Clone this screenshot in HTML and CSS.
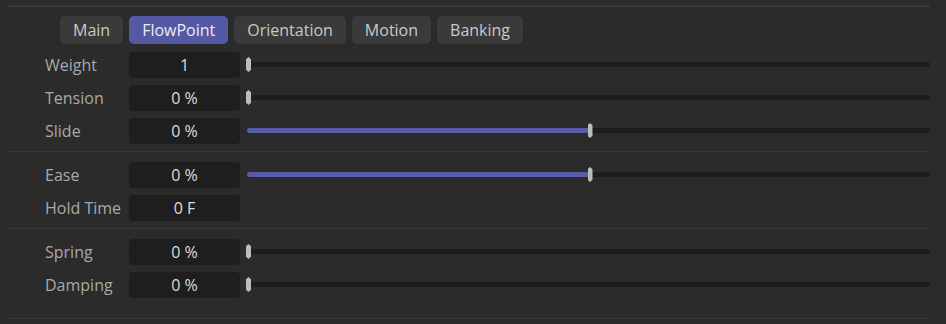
FILE: index.html
```html
<!DOCTYPE html>
<html lang="en">

<head>
    <meta charset="UTF-8">
    <title>FlowPoint</title>
    <link rel="stylesheet" href="styles.css">
</head>

<body>
    <div class="panel">
        <div class="rule top"></div>

        <div class="tabs">
            <button class="tab">Main</button>
            <button class="tab active">FlowPoint</button>
            <button class="tab">Orientation</button>
            <button class="tab">Motion</button>
            <button class="tab">Banking</button>
        </div>

        <div class="row">
            <span class="label">Weight</span>
            <span class="field">1</span>
            <div class="slider"><div class="fill" style="width: 0%"></div><span class="knob" style="left: 0%"></span></div>
        </div>
        <div class="row">
            <span class="label">Tension</span>
            <span class="field">0 %</span>
            <div class="slider"><div class="fill" style="width: 0%"></div><span class="knob" style="left: 0%"></span></div>
        </div>
        <div class="row">
            <span class="label">Slide</span>
            <span class="field">0 %</span>
            <div class="slider"><div class="fill" style="width: 50%"></div><span class="knob" style="left: 50%"></span></div>
        </div>

        <div class="rule"></div>

        <div class="row">
            <span class="label">Ease</span>
            <span class="field">0 %</span>
            <div class="slider"><div class="fill" style="width: 50%"></div><span class="knob" style="left: 50%"></span></div>
        </div>
        <div class="row">
            <span class="label">Hold Time</span>
            <span class="field">0 F</span>
        </div>

        <div class="rule"></div>

        <div class="row">
            <span class="label">Spring</span>
            <span class="field">0 %</span>
            <div class="slider"><div class="fill" style="width: 0%"></div><span class="knob" style="left: 0%"></span></div>
        </div>
        <div class="row">
            <span class="label">Damping</span>
            <span class="field">0 %</span>
            <div class="slider"><div class="fill" style="width: 0%"></div><span class="knob" style="left: 0%"></span></div>
        </div>

        <div class="rule bottom"></div>
    </div>
</body>

</html>
```

FILE: styles.css
```css
body {
    margin: 0;
    background-color: #2b2b2b;
    font-family: "Open Sans", "Noto Sans", sans-serif;
    font-size: 16px;
    color: #a9a9a9;
}

.panel {
    padding: 0 16px 0 8px;
}

/* Lignes de séparation */
.rule {
    height: 1px;
    background-color: #363636;
    margin: 4px 0 6px 0;
}

.rule.top {
    height: 2px;
    margin: 5px 0 9px 0;
    background-color: #383838;
}

.rule.bottom {
    margin-top: 17px;
    margin-bottom: 0;
}

/* Onglets */
.tabs {
    display: flex;
    gap: 6px;
    padding-left: 52px;
    margin-bottom: 4px;
}

.tab {
    height: 28px;
    padding: 0 13px;
    border: none;
    border-radius: 5px;
    background-color: #3a3a3a;
    color: #c9c9c9;
    font-family: inherit;
    font-size: 16px;
}

.tab.active {
    background-color: #5558a3;
    color: #ececf4;
}

/* Lignes de paramètres */
.row {
    display: flex;
    align-items: center;
    height: 33px;
    padding-left: 37px;
}

.label {
    width: 84px;
    white-space: nowrap;
}

.field {
    width: 111px;
    height: 26px;
    line-height: 26px;
    background-color: #1e1e1e;
    border-radius: 4px;
    text-align: center;
    color: #dcdcdc;
}

.slider {
    position: relative;
    flex: 1;
    height: 5px;
    margin-left: 7px;
    background-color: #1d1d1d;
    border-radius: 2px 3px 3px 2px;
}

.fill {
    height: 5px;
    background-color: #585ba6;
    border-radius: 2px 0 0 2px;
}

.knob {
    position: absolute;
    top: -5px;
    width: 5px;
    height: 15px;
    margin-left: -1px;
    background-color: #bdbdbd;
    clip-path: polygon(50% 0, 100% 15%, 100% 85%, 50% 100%, 0 85%, 0 15%);
}
```
